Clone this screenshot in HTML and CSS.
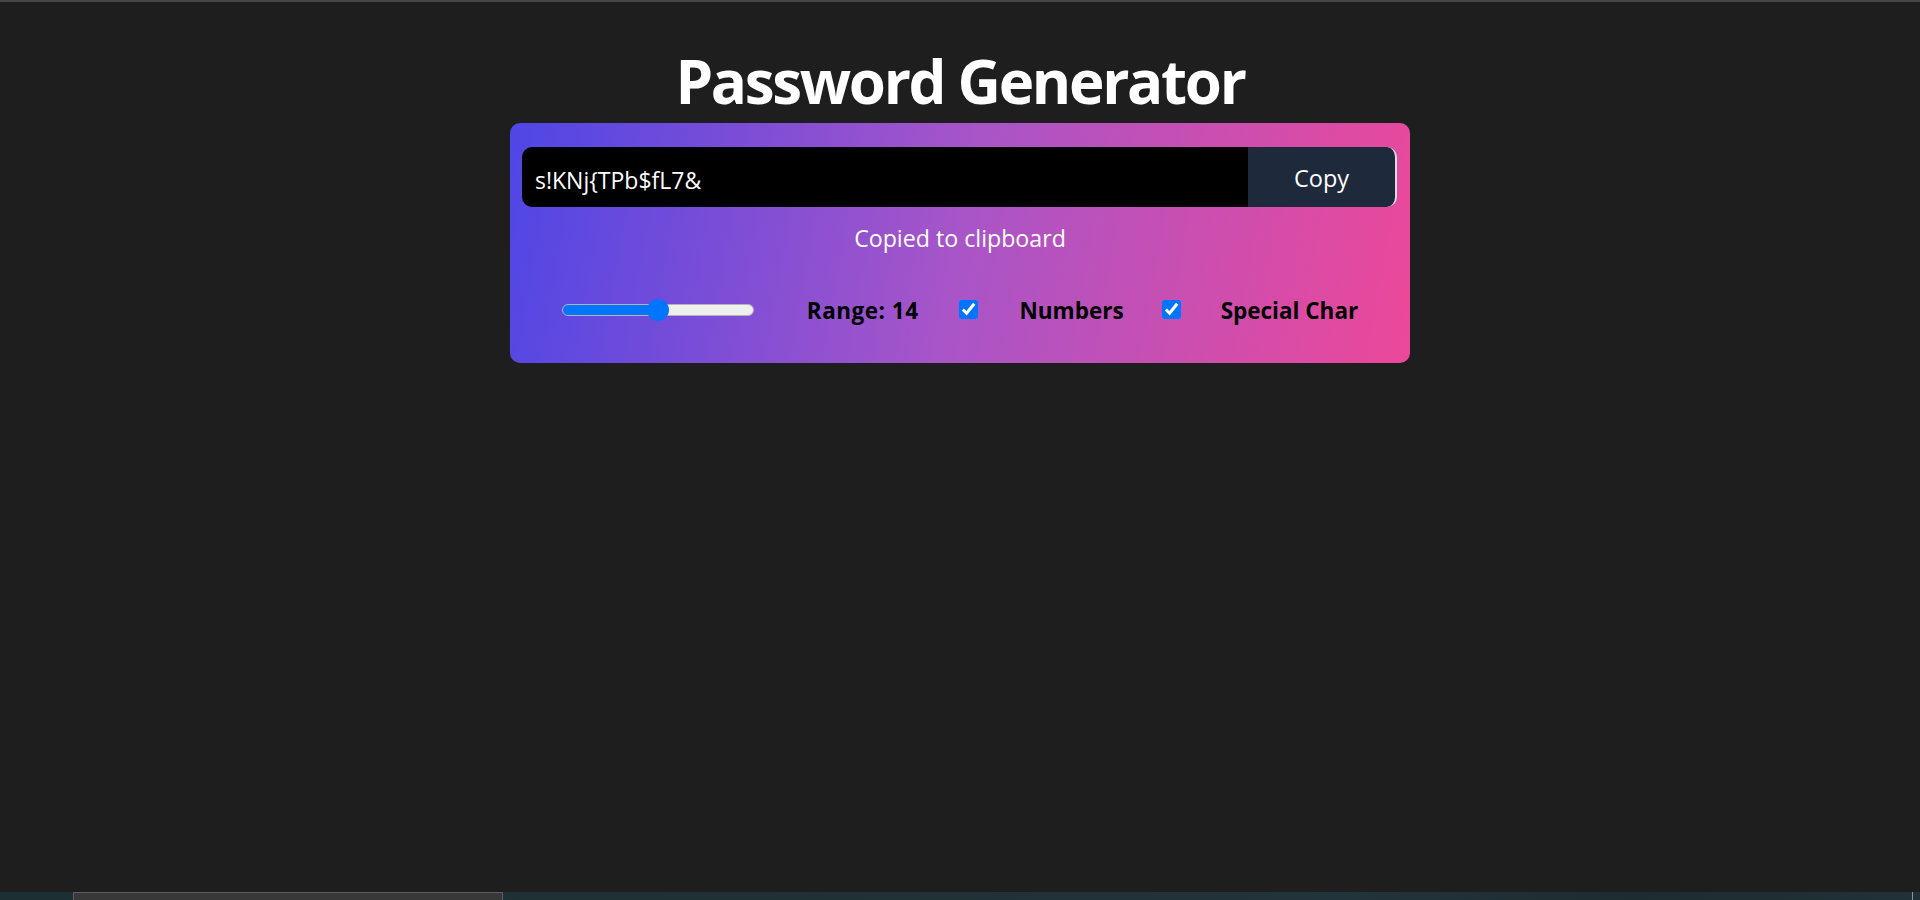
FILE: index.html
```html
<!DOCTYPE html>
<html lang="en">
<head>
<meta charset="utf-8">
<title>Password Generator</title>
<link rel="stylesheet" href="styles.css">
</head>
<body>
<div class="top-line"></div>
<main class="page">
  <h1 class="title">Password Generator</h1>
  <section class="card">
    <div class="pw-row">
      <input class="pw-field" type="text" value="s!KNj{TPb$fL7&amp;" readonly>
      <button class="copy-btn" type="button">Copy</button>
    </div>
    <p class="copied">Copied to clipboard</p>
    <div class="controls">
      <input class="range" type="range" min="4" max="24" value="14" style="--fill: 50%">
      <label class="lbl range-lbl">Range: 14</label>
      <input class="chk" type="checkbox" id="num" checked>
      <label class="lbl num-lbl" for="num">Numbers</label>
      <input class="chk chk-spc" type="checkbox" id="spc" checked>
      <label class="lbl" for="spc">Special Char</label>
    </div>
  </section>
</main>
<div class="taskbar">
  <div class="task-item"></div>
  <div class="task-end"></div>
</div>
</body>
</html>
```
FILE: styles.css
```css
* { box-sizing: border-box; }
html, body { margin: 0; padding: 0; }
body {
  width: 1920px;
  height: 900px;
  background: #1e1e1e;
  font-family: "Open Sans", "Noto Sans", sans-serif;
  color: #fff;
  display: flex;
  flex-direction: column;
  overflow: hidden;
}
.top-line {
  height: 2px;
  background: #474747;
  flex: none;
}
.page {
  flex: 1;
  display: flex;
  flex-direction: column;
  align-items: center;
}
.title {
  margin: 43px 0 0;
  font-size: 60px;
  line-height: 72px;
  font-weight: 700;
  letter-spacing: -2.3px;
  color: #fff;
}
.card {
  margin-top: 6px;
  width: 900px;
  height: 240px;
  border-radius: 10px;
  padding: 24px 12px 0;
  background: linear-gradient(100deg, #4f46e5 0%, #a855c8 50%, #ec4899 100%);
  display: flex;
  flex-direction: column;
  align-items: center;
}
.pw-row {
  display: flex;
  width: 875px;
  height: 60px;
  align-self: flex-start;
}
.pw-field {
  flex: 1;
  height: 60px;
  border: none;
  outline: none;
  background: #000;
  color: #fff;
  border-radius: 10px 0 0 10px;
  padding: 5px 13px 0;
  font-family: inherit;
  font-size: 23px;
}
.copy-btn {
  width: 149px;
  height: 60px;
  border: none;
  border-right: 2px solid #d9dce2;
  border-radius: 0 10px 10px 0;
  background: #1e293b;
  color: #fff;
  font-family: inherit;
  font-size: 23.5px;
  padding: 2px 0 0;
}
.copied {
  margin: 16px 0 0;
  font-size: 23.2px;
  line-height: 30px;
  color: #fff;
}
.controls {
  margin-top: 37px;
  height: 40px;
  display: flex;
  align-items: center;
}
.range {
  -webkit-appearance: none;
  appearance: none;
  width: 192px;
  height: 12px;
  margin: 0 53px 0 0;
  border-radius: 6px;
  border: 1px solid #b5b5b5;
  background: linear-gradient(to right, #0075ff var(--fill), #efefef var(--fill));
}
.range::-webkit-slider-thumb {
  -webkit-appearance: none;
  appearance: none;
  width: 22px;
  height: 22px;
  border-radius: 50%;
  background: #0075ff;
  border: none;
}
.lbl {
  font-size: 22.5px;
  font-weight: 700;
  color: #000;
}
.range-lbl { margin-right: 40px; letter-spacing: 0.5px; }
.chk {
  width: 19px;
  height: 19px;
  margin: -2px 42px 0 0;
  accent-color: #0075ff;
}
.chk-spc { margin-right: 40px; }
.num-lbl { margin-right: 38px; }
.taskbar {
  flex: none;
  height: 8px;
  background: linear-gradient(to right, #1c2f33 0%, #1f3134 40%, #22343b 70%, #1d2c30 85%, #203238 100%);
  display: flex;
  align-items: flex-start;
}
.task-item {
  margin-left: 73px;
  width: 430px;
  height: 8px;
  background: #383838;
  border: 1px solid #5e5e5e;
  border-bottom: none;
}
.task-end {
  margin-left: auto;
  margin-right: 7px;
  width: 1px;
  height: 8px;
  background: #8a9498;
}
```
